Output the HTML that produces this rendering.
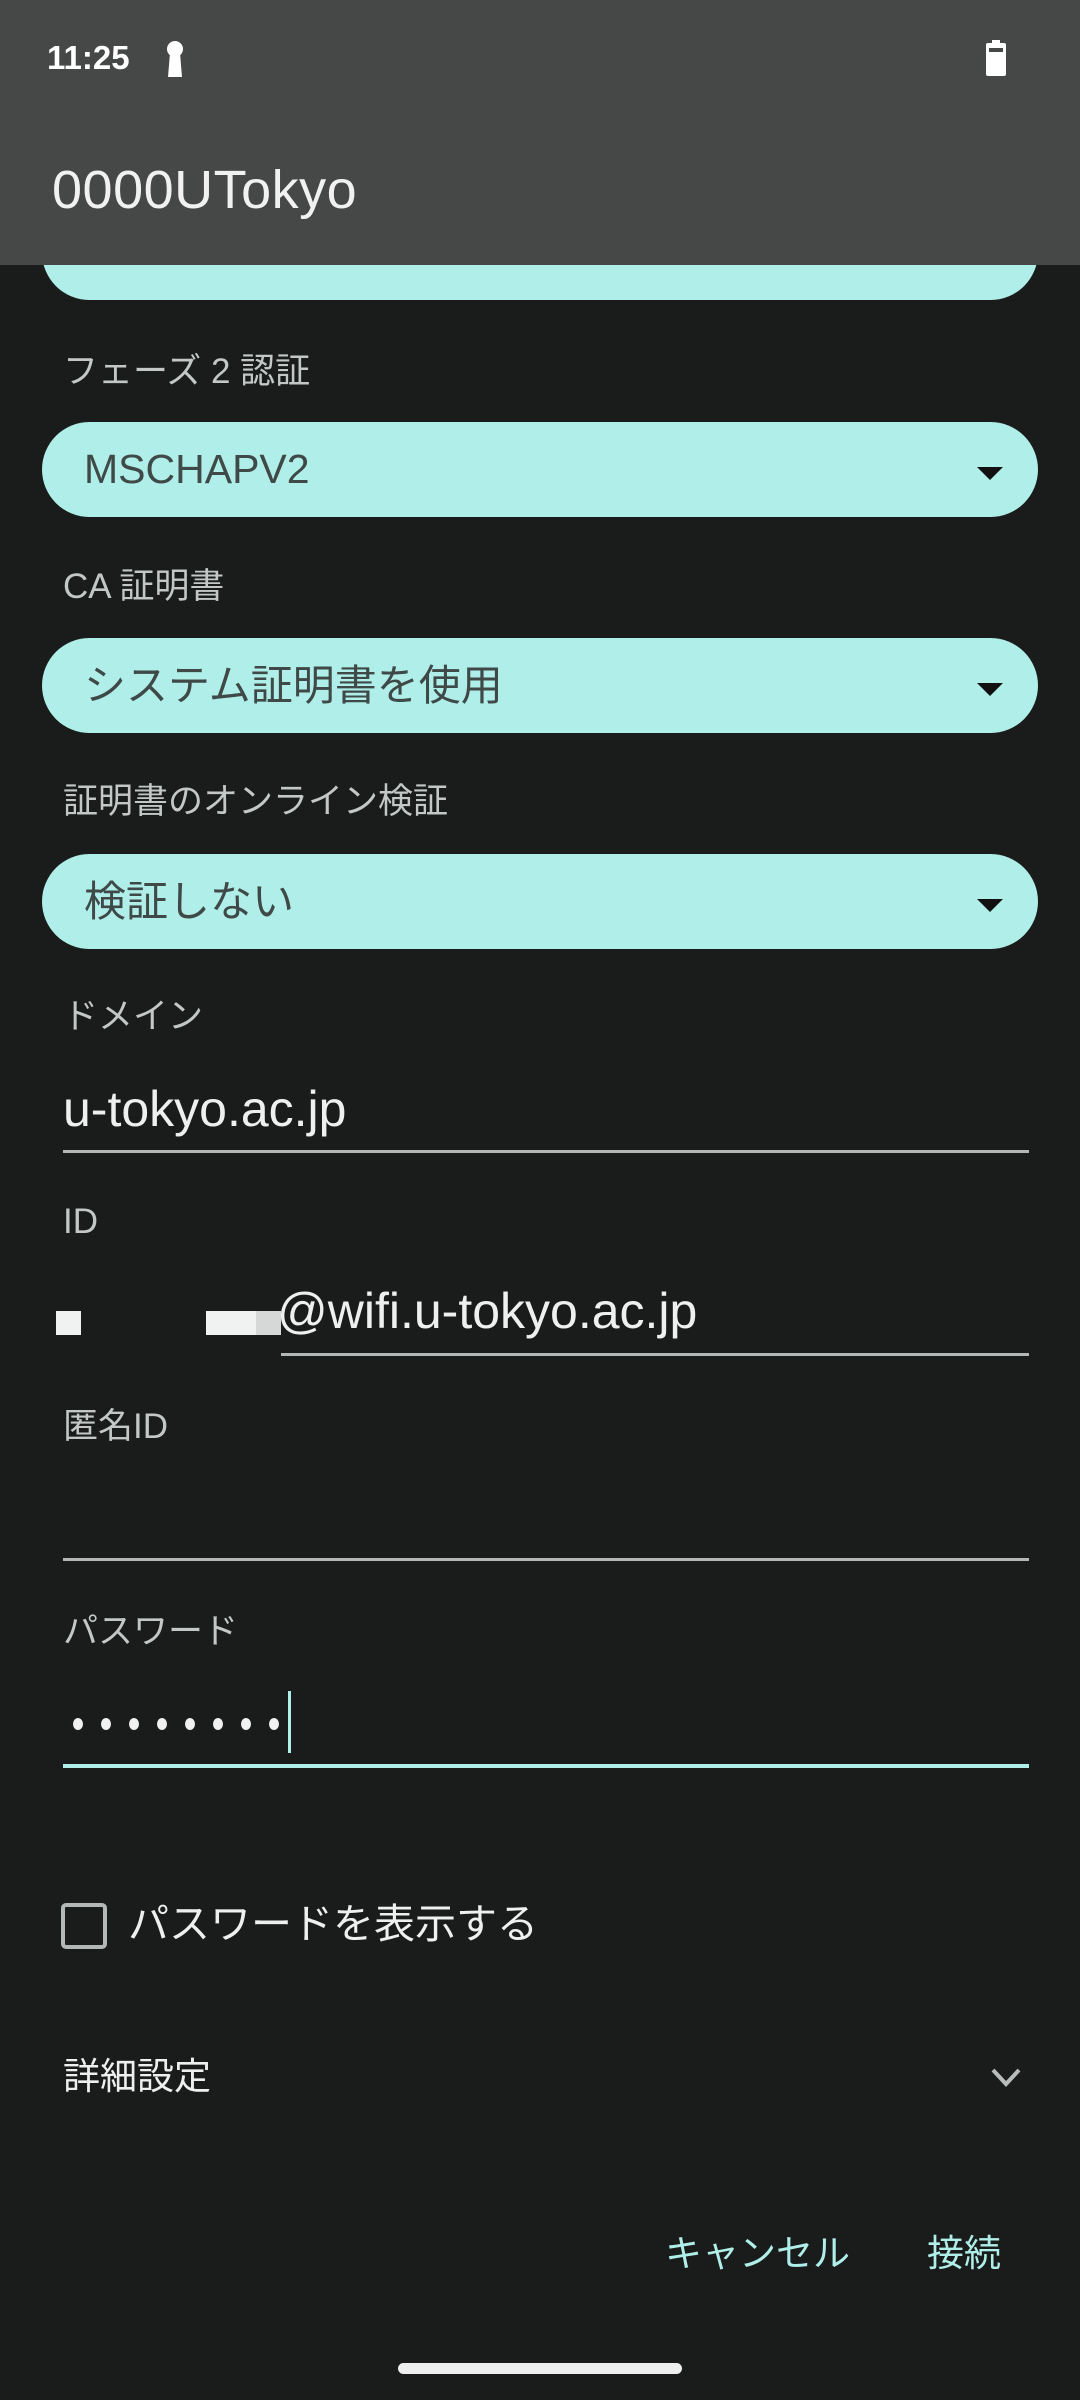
<!DOCTYPE html>
<html><head><meta charset="utf-8"><style>
*{margin:0;padding:0;box-sizing:border-box}
body{width:1080px;height:2400px;background:#1a1c1b;position:relative;overflow:hidden;font-family:"Liberation Sans","Noto Sans CJK JP",sans-serif}
.a{position:absolute;white-space:nowrap}
.lbl{color:#c3c8c6;font-size:35px;left:63px;height:50px;line-height:50px}
.pill{position:absolute;left:42px;width:996px;height:95px;border-radius:48px;background:#b0efe9;color:#3f4947;font-size:42px;line-height:95px;padding-left:42px}
.pill:after{content:"";position:absolute;right:35px;top:45px;border-left:13px solid transparent;border-right:13px solid transparent;border-top:13px solid #111}
.line{position:absolute;height:3px;background:#b3b8b6}
.val{color:#eef0ef;font-size:50px;height:60px;line-height:60px}
</style></head><body>
<div class="a" style="left:0;top:0;width:1080px;height:265px;background:#464847"></div>
<div class="a" style="left:47px;top:38px;color:#fff;font-size:33px;font-weight:bold;line-height:40px">11:25</div>
<svg class="a" style="left:164px;top:41px" width="22" height="36" viewBox="0 0 22 36"><circle cx="11" cy="8" r="8" fill="#fff"/><path d="M6 12 L16 12 L18 36 L4 36 Z" fill="#fff"/></svg>
<svg class="a" style="left:985px;top:40px" width="22" height="36" viewBox="0 0 22 36"><rect x="7" y="0" width="8" height="4" fill="#fff"/><rect x="1" y="3" width="20" height="33" rx="2" fill="#fff"/><rect x="4" y="8" width="14" height="4" fill="#464847"/></svg>
<div class="a" style="left:52px;top:158px;color:#f0f1f0;font-size:54px;line-height:64px;letter-spacing:0.5px">0000UTokyo</div>

<div class="pill" style="top:205px;height:95px;clip-path:inset(60px 0 0 0)"></div>

<div class="a lbl" style="top:347px">フェーズ 2 認証</div>
<div class="pill" style="top:422px;font-size:41px">MSCHAPV2</div>
<div class="a lbl" style="top:562px">CA 証明書</div>
<div class="pill" style="top:638px">システム証明書を使用</div>
<div class="a lbl" style="top:777px">証明書のオンライン検証</div>
<div class="pill" style="top:854px">検証しない</div>
<div class="a lbl" style="top:992px">ドメイン</div>
<div class="a val" style="left:63px;top:1079px">u-tokyo.ac.jp</div>
<div class="line" style="left:63px;top:1150px;width:966px"></div>
<div class="a lbl" style="top:1197px">ID</div>
<div class="a" style="left:56px;top:1311px;width:25px;height:24px;background:#f0f2f1"></div>
<div class="a" style="left:206px;top:1311px;width:50px;height:24px;background:#f0f2f1"></div>
<div class="a" style="left:256px;top:1311px;width:25px;height:24px;background:#d6d8d7"></div>
<div class="a val" style="left:277px;top:1281px">@wifi.u-tokyo.ac.jp</div>
<div class="line" style="left:281px;top:1353px;width:748px"></div>
<div class="a lbl" style="top:1402px">匿名ID</div>
<div class="line" style="left:63px;top:1558px;width:966px"></div>
<div class="a lbl" style="top:1607px">パスワード</div>
<svg class="a" style="left:70px;top:1712px" width="220" height="26"><g fill="#f0f1f0"><ellipse cx="8" cy="12" rx="5" ry="6"/><ellipse cx="36" cy="12" rx="5" ry="6"/><ellipse cx="64" cy="12" rx="5" ry="6"/><ellipse cx="92" cy="12" rx="5" ry="6"/><ellipse cx="120" cy="12" rx="5" ry="6"/><ellipse cx="148" cy="12" rx="5" ry="6"/><ellipse cx="176" cy="12" rx="5" ry="6"/><ellipse cx="204" cy="12" rx="5" ry="6"/></g></svg>
<div class="a" style="left:288px;top:1691px;width:3px;height:62px;background:#b0efe9"></div>
<div class="a" style="left:63px;top:1764px;width:966px;height:4px;background:#b0efe9"></div>

<div class="a" style="left:61px;top:1903px;width:46px;height:46px;border:4px solid #b3b8b6;border-radius:5px"></div>
<div class="a" style="left:128px;top:1896px;color:#eef0ef;font-size:41px;line-height:56px">パスワードを表示する</div>
<div class="a" style="left:63px;top:2050px;color:#eef0ef;font-size:37px;line-height:54px">詳細設定</div>
<svg class="a" style="left:990px;top:2066px" width="32" height="24" viewBox="0 0 32 24"><path d="M3 4 L16 18 L29 4" fill="none" stroke="#b8bdbb" stroke-width="4"/></svg>
<div class="a" style="left:665px;top:2227px;color:#b0efe9;font-size:37px;line-height:54px">キャンセル</div>
<div class="a" style="left:927px;top:2227px;color:#b0efe9;font-size:37px;line-height:54px">接続</div>
<div class="a" style="left:398px;top:2363px;width:284px;height:11px;border-radius:6px;background:#efefef"></div>
</body></html>
